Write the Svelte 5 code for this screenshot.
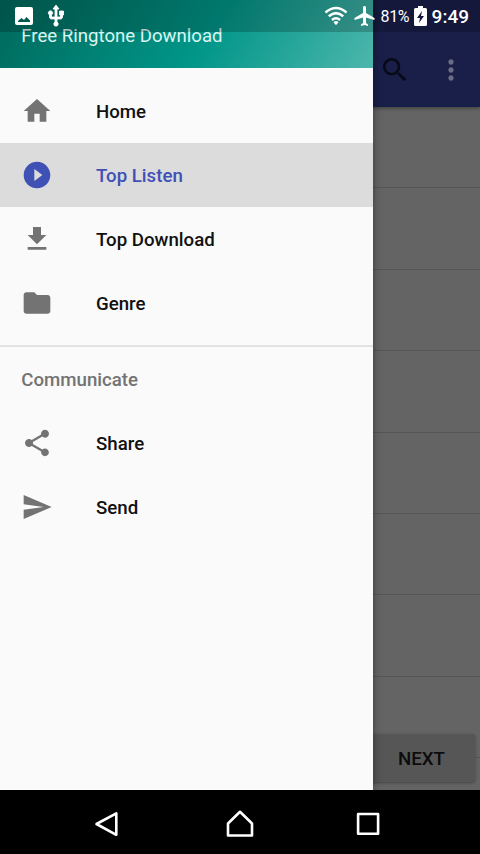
<script>
  const primary = [
    { label: 'Home', path: 'M10 20v-6h4v6h5v-8h3L12 3 2 12h3v8z' },
    { label: 'Top Listen', active: true, path: 'M12 2C6.48 2 2 6.48 2 12s4.48 10 10 10 10-4.48 10-10S17.52 2 12 2zm-2 14.5v-9l6 4.5-6 4.5z' },
    { label: 'Top Download', path: 'M19 9h-4V3H9v6H5l7 7 7-7zM5 18v2h14v-2H5z' },
    { label: 'Genre', path: 'M10 4H4c-1.1 0-1.99.9-1.99 2L2 18c0 1.1.9 2 2 2h16c1.1 0 2-.9 2-2V8c0-1.1-.9-2-2-2h-8l-2-2z' }
  ];
  const communicate = [
    { label: 'Share', path: 'M18 16.08c-.76 0-1.44.3-1.96.77L8.91 12.7c.05-.23.09-.46.09-.7s-.04-.47-.09-.7l7.05-4.11c.54.5 1.25.81 2.04.81 1.66 0 3-1.34 3-3s-1.34-3-3-3-3 1.34-3 3c0 .24.04.47.09.7L8.04 9.81C7.5 9.31 6.79 9 6 9c-1.66 0-3 1.34-3 3s1.34 3 3 3c.79 0 1.5-.31 2.04-.81l7.12 4.16c-.05.21-.08.43-.08.65 0 1.61 1.31 2.92 2.92 2.92s2.92-1.31 2.92-2.92-1.31-2.92-2.92-2.92z' },
    { label: 'Send', path: 'M2.01 21L23 12 2.01 3 2 10l15 2-15 2z' }
  ];
  const rows = Array(8);
</script>

{#snippet entry(item)}
  <li class="item" class:active={item.active}>
    <svg width="32" height="32" viewBox="0 0 24 24"><path d={item.path} /></svg>
    <span>{item.label}</span>
  </li>
{/snippet}

<div class="screen">
  <div class="window">
    <main class="app">
      <header class="toolbar">
        <svg class="search" width="32" height="32" viewBox="0 0 24 24"><path d="M15.5 14h-.79l-.28-.27C15.41 12.59 16 11.11 16 9.5 16 5.91 13.09 3 9.5 3S3 5.91 3 9.5 5.91 16 9.5 16c1.61 0 3.09-.59 4.23-1.57l.27.28v.79l5 4.99L20.49 19l-4.99-5zm-6 0C7.01 14 5 11.99 5 9.5S7.01 5 9.5 5 14 7.01 14 9.5 11.99 14 9.5 14z" /></svg>
        <svg class="more" width="32" height="32" viewBox="0 0 24 24"><path d="M12 8c1.1 0 2-.9 2-2s-.9-2-2-2-2 .9-2 2 .9 2 2 2zm0 2c-1.1 0-2 .9-2 2s.9 2 2 2 2-.9 2-2-.9-2-2-2zm0 6c-1.1 0-2 .9-2 2s.9 2 2 2 2-.9 2-2-.9-2-2-2z" /></svg>
      </header>
      <div class="list">
        {#each rows as _}<div class="row"></div>{/each}
      </div>
      <button class="next">NEXT</button>
    </main>

    <nav class="drawer">
      <div class="banner">Free Ringtone Download</div>
      <ul class="group">
        {#each primary as item}{@render entry(item)}{/each}
      </ul>
      <h2>Communicate</h2>
      <ul>
        {#each communicate as item}{@render entry(item)}{/each}
      </ul>
    </nav>

    <div class="status">
      <svg class="photo" width="18" height="18" viewBox="0 0 18 18"><path fill-rule="evenodd" d="M2 0h14a2 2 0 0 1 2 2v14a2 2 0 0 1-2 2H2a2 2 0 0 1-2-2V2a2 2 0 0 1 2-2zM3 15h12v-1.500L11.500 10 9 13 6.500 11 3 14z" /></svg>
      <svg class="usb" width="24" height="24" viewBox="0 0 24 24"><path stroke="#fff" stroke-width=".8" d="M15.500 7v4h1v2H13V5h2l-3-4-3 4h2v8H7.500v-2.070c.7-.37 1.200-1.080 1.200-1.930 0-1.210-.99-2.200-2.200-2.200S4.300 7.790 4.300 9c0 .85.5 1.560 1.200 1.930V13c0 1.110.89 2 2 2H11v3.050c-.71.37-1.200 1.100-1.200 1.950a2.200 2.200 0 0 0 4.400 0c0-.85-.49-1.580-1.200-1.950V15h3.500c1.110 0 2-.89 2-2v-2h1V7z" /></svg>
      <svg class="wifi" width="24" height="20" viewBox="0 0 24 20"><g fill="none" stroke="#fff" stroke-width="2.500"><path d="M1.500 6.500Q12-2.500 22.500 6.500" /><path d="M4.800 10.300Q12 4 19.200 10.300" /><path d="M8 14Q12 10.500 16 14" /></g><path d="M9.500 16.200Q12 14 14.500 16.200L12 19.300z" /></svg>
      <svg class="plane" width="24" height="24" viewBox="0 0 24 24"><path d="M21.500 16v-2L13 9V3.500C13 2.670 12.330 2 11.500 2S10 2.670 10 3.500V9l-8.500 5v2l8.500-2.500V19l-2 1.500V22l3.500-1 3.500 1v-1.500L13 19v-5.500z" /></svg>
      <span class="percent">81%</span>
      <svg class="battery" width="13" height="20" viewBox="0 0 13 20"><path fill-rule="evenodd" d="M4 0h5v2h2.500Q13 2 13 3.500v15Q13 20 11.500 20h-10Q0 20 0 18.500v-15Q0 2 1.500 2H4zM8 5L3 12h3l-1 5 5-7H7z" /></svg>
      <time>9:49</time>
    </div>
  </div>

  <footer>
    <svg width="28" height="32" viewBox="0 0 28 32"><path d="M3.500 16L23.300 5.300v21.500z" /></svg>
    <svg class="home" width="32" height="32" viewBox="0 0 32 32"><path d="M4 27.500V15.500L16 3.800l12 11.700v12z" /></svg>
    <svg width="28" height="32" viewBox="0 0 28 32"><path d="M4.100 6h20v19.800h-20z" /></svg>
  </footer>
</div>

<style>
  :global(body) { margin: 0; background: #000; }
  * { box-sizing: border-box; }
  .screen {
    width: 480px;
    height: 854px;
    display: flex;
    flex-direction: column;
    overflow: hidden;
    background: #000;
    font-family: Roboto, "Noto Sans", sans-serif;
  }
  svg { flex: none; display: block; }
  .window { position: relative; height: 790px; overflow: hidden; }
  .app { height: 100%; background: #646464; }
  .toolbar {
    height: 107px;
    padding: 32px 13px 0 0;
    display: flex;
    align-items: center;
    justify-content: flex-end;
    gap: 24px;
    background: #1a1f4a;
    box-shadow: 0 1px 4px #0006;
  }
  .search { fill: #080a17; }
  .more { fill: #696c82; }
  .row { height: 81.400px; border-bottom: 1.500px solid #565656; }
  .next {
    position: absolute;
    right: 5px;
    bottom: 8px;
    width: 108px;
    height: 48px;
    padding: 2px 0 0 1px;
    border: 0;
    border-radius: 3px;
    background: #565656;
    box-shadow: 0 1px 3px #0005;
    color: #0c0c0c;
    font: 500 18.670px Roboto, sans-serif;
  }
  .drawer {
    position: absolute;
    inset: 0 auto 0 0;
    width: 373.300px;
    background: #fafafa;
    box-shadow: 0 0 9px #0006;
  }
  .banner {
    height: 68px;
    padding: 25px 21.300px 0;
    background: linear-gradient(120deg, #00695c, #009688 55%, #4db6ac);
    color: #dcf4f1;
    font-size: 18.600px;
    line-height: 22px;
  }
  ul { margin: 0; padding: 0; list-style: none; }
  .group { padding: 11px 0 10px; border-bottom: 2px solid #e2e2e2; }
  .item {
    height: 64px;
    padding-left: 21.300px;
    display: flex;
    align-items: center;
    gap: 42.700px;
    color: #111;
    fill: #737373;
    font-size: 18.670px;
    font-weight: 500;
  }
  .item span { padding-top: 2px; }
  .item.active { background: #dcdcdc; color: #3f51b5; fill: #3f51b5; }
  h2 {
    height: 64px;
    margin: 0;
    padding-left: 21.300px;
    color: #737373;
    font-size: 18.670px;
    font-weight: 500;
    line-height: 67px;
  }
  .status {
    position: absolute;
    inset: 0 0 auto;
    height: 32px;
    padding: 0 11px 0 15px;
    display: flex;
    align-items: center;
    background: #0003;
    color: #fff;
    fill: #fff;
  }
  .usb { margin-left: 11px; }
  .wifi { margin-left: auto; }
  .plane { margin-left: 4.500px; }
  .percent { margin-left: 4px; font-size: 16px; letter-spacing: -.4px; }
  .battery { margin-left: 4.500px; }
  time { margin-left: 5px; font-size: 19px; font-weight: 500; }
  footer {
    height: 64px;
    padding: 4px 98px 0 93px;
    display: flex;
    align-items: center;
    justify-content: space-between;
  }
  .home { margin-left: 5px; }
  footer path { fill: none; stroke: #fff; stroke-width: 2.600; stroke-linejoin: round; }
</style>
